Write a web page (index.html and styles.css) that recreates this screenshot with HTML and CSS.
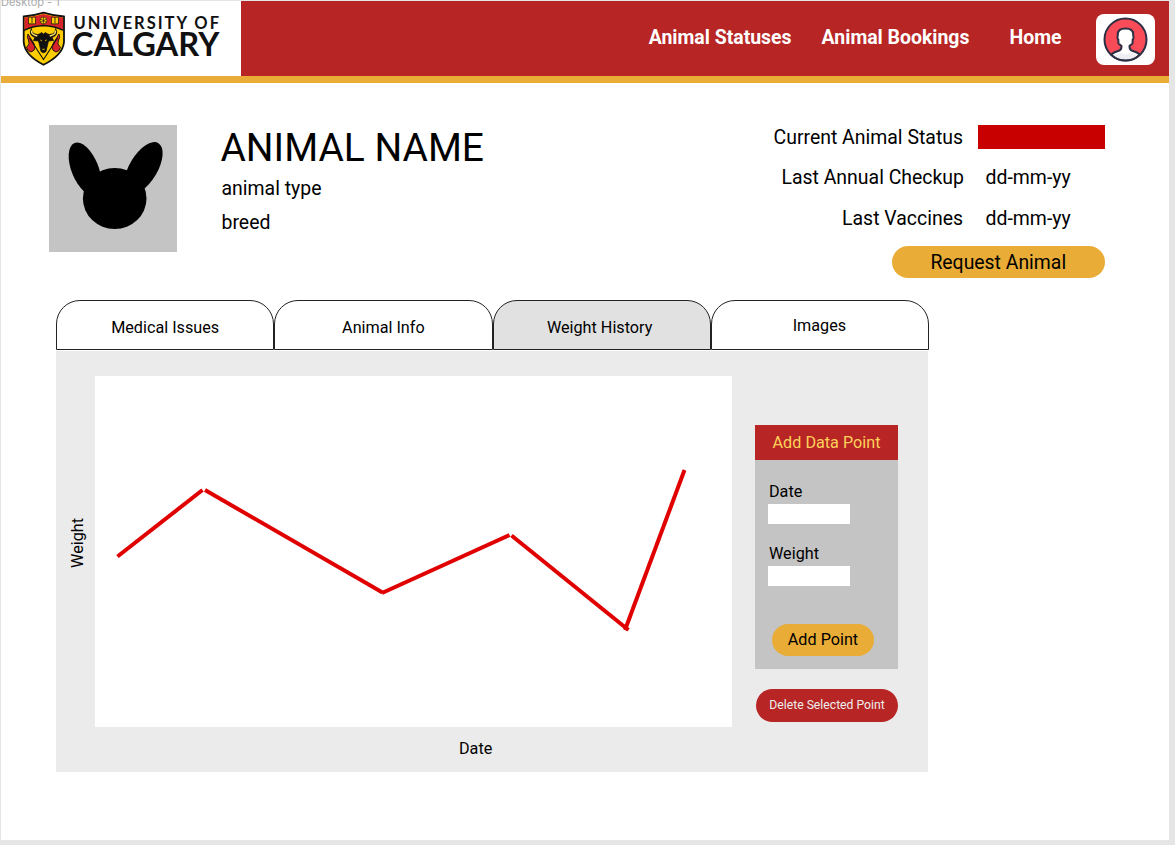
FILE: index.html
```html
<!DOCTYPE html>
<html lang="en">
<head>
<meta charset="utf-8">
<title>Animal Profile</title>
<link rel="stylesheet" href="styles.css">
</head>
<body>
<div class="frame">
  <header class="header">
    <svg class="logo" viewBox="0 0 240 75" role="img" aria-label="University of Calgary">
      <path d="M22.700 15.500Q32 15 42.500 11.700Q53 15 63 15.500V41Q62 54 42.500 63.800Q23.500 54 22.700 41Z" fill="#ffcd00" stroke="#111" stroke-width="1.800"/>
      <path d="M23.600 16.500Q33 16 42.500 12.900Q52 16 62 16.500V28.500Q51 24.300 42.500 24Q34 24.300 23.600 28.500Z" fill="#d8232a"/>
      <path d="M23 29.300Q33 24.800 42.500 24.500Q52 24.800 62.500 29.300" fill="none" stroke="#111" stroke-width="1.300"/>
      <path d="M27.500 16.500q2-1 3.500.4q1.500-1.400 3.500-.4v6.500q-2-.8-3.500.4q-1.500-1.200-3.500-.4zM50.500 16.500q2-1 3.500.4q1.500-1.400 3.500-.4v6.500q-2-.8-3.500.4q-1.500-1.200-3.500-.4z" fill="#ffcd00" stroke="#111" stroke-width=".7"/>
      <path d="M31 17v6M54 17v6" stroke="#111" stroke-width=".8"/>
      <circle cx="42.500" cy="19.500" r="3.400" fill="#ffcd00" stroke="#111" stroke-width=".6"/>
      <path d="M39.700 18l5.600 3.200M39.700 21.200l5.600-3.200M42.500 16.200v6.600" stroke="#111" stroke-width=".6"/>
      <path d="M27 33q-1.500 4 .5 6q2 4-2 7.500q1 4 4.500 4.500q4-1 4-5q-1-5-4-8zM58 33q1.500 4-.5 6q-2 4 2 7.500q-1 4-4.500 4.500q-4-1-4-5q1-5 4-8z" fill="#d8232a" stroke="#111" stroke-width=".9"/>
      <path d="M28.500 37L42.500 58.500L56.500 37" fill="none" stroke="#111" stroke-width="1.100"/>
      <path d="M30.500 27.500Q27 34 34 36.500L32.500 39.500L37.500 40L39 46L40 50.500Q42.500 53 45 50.500L46 46L47.500 40L52.500 39.500L51 36.500Q58 34 54.500 27.500Q55 33 48.500 33.500Q45.500 33 44.500 31.500L42.500 33L40.500 31.500Q39.500 33 36.500 33.500Q30 33 30.500 27.500Z" fill="#111" stroke="#111" stroke-width=".8"/>
      <path d="M30.600 29.500Q29.800 33.800 36.300 35M54.400 29.500Q55.200 33.800 48.700 35" fill="none" stroke="#ffe36b" stroke-width="1.300"/>
      <path d="M39.300 39l1.600.9M45.700 39l-1.600.9M41.300 48.300h2.400" stroke="#ffcd00" stroke-width=".9"/>
      <text class="logo-small" x="72.500" y="28" textLength="145.500">UNIVERSITY OF</text>
      <text class="logo-large" x="70.800" y="55" textLength="147.500" lengthAdjust="spacingAndGlyphs">CALGARY</text>
    </svg>
    <nav class="nav">
      <a class="nav-link">Animal Statuses</a>
      <a class="nav-link">Animal Bookings</a>
      <a class="nav-link nav-home">Home</a>
    </nav>
    <div class="account">
      <svg class="account-icon" viewBox="0 0 46 46">
        <circle cx="22.500" cy="22.500" r="21" fill="#fa4c58"/>
        <path d="M8 37.500Q11 35 16.500 33.500Q18.500 32.500 18.500 29L15.500 26.500L15.300 22.500Q14 21.500 14.800 18Q14.300 11.500 22.500 11.500T30.200 18Q31 21.500 29.700 22.500L29.500 26.500L26.500 29Q26.500 32.500 28.500 33.500Q34 35 37 37.500Q31 43.500 22.500 43.500T8 37.500Z" fill="#fff" stroke="#2d3045" stroke-width="2"/>
        <path d="M10.500 38.200Q14 36.500 18 36Q22.500 39 27 36Q31 36.500 34.500 38.200Q30 42.500 22.500 42.500T10.500 38.200Z" fill="#ededf2"/>
        <circle cx="22.500" cy="22.500" r="21" fill="none" stroke="#2d3045" stroke-width="2"/>
      </svg>
    </div>
  </header>

  <main class="content">
    <section class="profile">
      <svg class="portrait" viewBox="0 0 128 127">
        <ellipse cx="36" cy="44" rx="13.500" ry="28" transform="rotate(-22 36 44)"/>
        <ellipse cx="94.500" cy="43" rx="14" ry="29" transform="rotate(31 94.500 43)"/>
        <ellipse cx="65.700" cy="73.500" rx="31.800" ry="30.500"/>
      </svg>
      <div class="identity">
        <h1 class="name">ANIMAL NAME</h1>
        <p class="detail">animal type</p>
        <p class="detail">breed</p>
      </div>
      <div class="status">
        <dl class="status-list">
          <dt class="current">Current Animal Status</dt><dd class="swatch"></dd>
          <dt>Last Annual Checkup</dt><dd class="date">dd-mm-yy</dd>
          <dt class="vaccines">Last Vaccines</dt><dd class="date">dd-mm-yy</dd>
        </dl>
        <button class="btn request">Request Animal</button>
      </div>
    </section>

    <section class="records">
      <div class="tabs">
        <div class="tab">Medical Issues</div>
        <div class="tab">Animal Info</div>
        <div class="tab active">Weight History</div>
        <div class="tab images">Images</div>
      </div>
      <div class="panel">
        <div class="y-label"><span>Weight</span></div>
        <div class="chart-column">
          <svg class="chart" viewBox="0 0 637 351">
            <g stroke="#e00000" stroke-width="4">
              <path d="M22.500 180.500L107.500 114"/>
              <path d="M110 114L287.500 216.500"/>
              <path d="M287 217L414.500 159"/>
              <path d="M416.500 159.500L533.500 254"/>
              <path d="M530 254L589.500 94"/>
            </g>
          </svg>
          <div class="x-label">Date</div>
        </div>
        <aside class="tools">
          <form class="add-card">
            <h2 class="card-title">Add Data Point</h2>
            <div class="card-body">
              <label class="field">Date<input class="input"></label>
              <label class="field">Weight<input class="input"></label>
              <button class="btn add" type="button">Add Point</button>
            </div>
          </form>
          <button class="btn delete">Delete Selected Point</button>
        </aside>
      </div>
    </section>
  </main>
</div>
<span class="frame-label">Desktop - 1</span>
</body>
</html>
```
FILE: styles.css
```css
* { box-sizing: border-box; }
body {
  margin: 0;
  padding: 1px 0 0 1px;
  height: 845px;
  overflow: hidden;
  background: #e5e5e5;
  color: #000;
  font-family: Roboto, sans-serif;
}
h1, h2, p, dl, dd { margin: 0; font-weight: 400; }
button, input { border: 0; padding: 0; font-family: inherit; }
.frame { width: 1168px; height: 839px; background: #fff; }
.frame-label {
  position: absolute;
  left: 1px;
  top: -5px;
  color: #aaa;
  font: 11px/14px Inter, sans-serif;
}

.header {
  display: flex;
  height: 82px;
  background: #b72524;
  border-bottom: 7px solid #e9ac36;
}
.logo { width: 240px; height: 75px; background: #fff; }
.logo-small { font: 700 16.500px Lato, sans-serif; fill: #111; }
.logo-large { font: 700 32px Lato, sans-serif; fill: #111; }
.nav {
  display: flex;
  gap: 30px;
  margin-left: auto;
  padding-top: 25px;
}
.nav-link { color: #fff; font-size: 19.450px; line-height: 24px; font-weight: 700; }
.nav-home { margin-left: 10px; }
.account {
  display: flex;
  align-items: center;
  justify-content: center;
  width: 59px;
  height: 51px;
  margin: 13px 14px 0 34.500px;
  background: #fff;
  border-radius: 8px;
}
.account-icon { width: 46px; height: 46px; }

.content { padding: 42px 64.500px 0 48px; }
.profile { display: flex; height: 175px; }
.portrait { width: 128px; height: 127px; background: #c4c4c4; }
.identity { padding-left: 43.500px; }
.name { margin-bottom: 1px; font-size: 38.900px; line-height: 46px; }
.detail { padding-left: 1px; font-size: 19.450px; line-height: 34px; }
.status {
  display: flex;
  flex-direction: column;
  align-items: flex-end;
  width: 340px;
  margin-left: auto;
}
.status-list {
  display: grid;
  grid-template-columns: 1fr 126.500px;
  column-gap: 14px;
  grid-auto-rows: 24px;
  row-gap: 16.500px;
  width: 100%;
  font-size: 19.450px;
  line-height: 24px;
  text-align: right;
}
.current { padding: 1px 1px 0 0; }
.vaccines { padding: 1px 1px 0 0; }
.vaccines + .date { padding-top: 1px; }
.swatch { background: #c80000; }
.date { padding-left: 7.500px; text-align: left; }
.btn { border-radius: 17px; text-align: center; }
.request {
  width: 212.500px;
  height: 32px;
  margin-top: 16px;
  background: #e9ac36;
  font-size: 19.400px;
}

.records { width: 873px; margin-left: 7px; }
.tabs { display: flex; height: 50px; }
.tab {
  flex: none;
  width: 218.250px;
  padding-top: 3px;
  border: 1px solid #222;
  border-radius: 24px 24px 0 0;
  font-size: 16.200px;
  line-height: 48px;
  text-align: center;
}
.tab.active { padding-right: 4px; background: #e1e1e1; }
.images { padding: 1px 1px 0 0; line-height: 47px; }
.panel {
  display: flex;
  width: 872px;
  height: 421px;
  margin-top: 1px;
  padding-top: 25px;
  background: #ebebeb;
}
.y-label {
  display: flex;
  align-items: center;
  justify-content: center;
  width: 38.500px;
  height: 333px;
  font-size: 16.200px;
}
.y-label span { writing-mode: vertical-rl; transform: rotate(180deg); padding-left: 1px; padding-right: 5px; }
.chart-column { width: 637px; }
.chart { display: block; width: 637px; height: 351px; background: #fff; }
.x-label { padding-left: 364.500px; font-size: 16.200px; line-height: 43px; }
.tools { width: 143px; margin: 49px 0 0 23.500px; }
.add-card { height: 244px; background: #c4c4c4; }
.card-title {
  height: 35px;
  background: #b72524;
  color: #ffd15c;
  font-size: 16.200px;
  line-height: 35px;
  text-align: center;
}
.card-body { padding: 22px 13px 0; }
.field { display: block; margin-bottom: 20px; font-size: 16.200px; line-height: 20px; text-indent: 1px; }
.input { display: block; width: 82px; height: 20px; margin-top: 2px; background: #fff; }
.add { display: block; width: 102px; height: 32px; margin: 38px 0 0 4px; padding-bottom: 1px; background: #e9ac36; font-size: 16.200px; }
.delete {
  width: 142px;
  height: 33px;
  margin: 20px 0 0 1px;
  padding-bottom: 1px;
  background: #b72524;
  color: #eee;
  font-size: 12.200px;
}
```
